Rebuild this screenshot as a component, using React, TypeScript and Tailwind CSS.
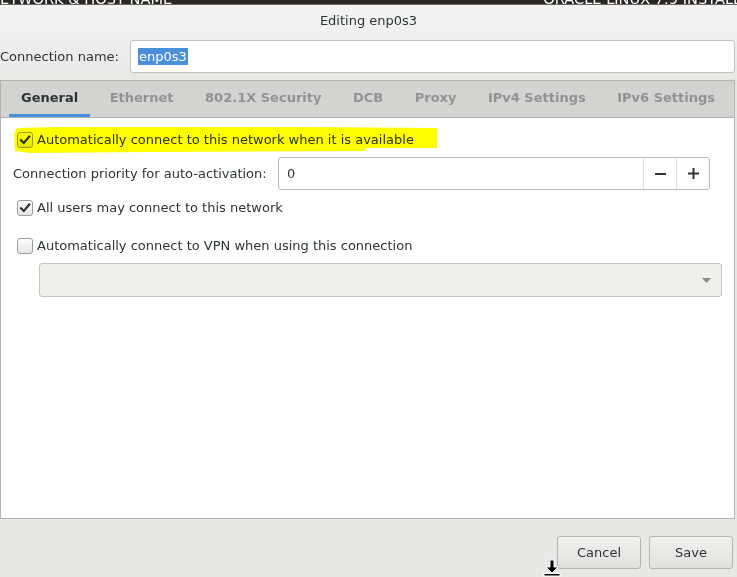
import React from "react";

const tabs = ["General", "Ethernet", "802.1X Security", "DCB", "Proxy", "IPv4 Settings", "IPv6 Settings"];

function CheckBox({ checked }: { checked: boolean }) {
  return (
    <span className="h-[16px] w-[16px] shrink-0 rounded-[3px] border border-[#9c9c9c] bg-linear-to-b from-white to-[#e4e4e2] flex items-center justify-center">
      {checked && (
        <svg width="12" height="12" viewBox="0 0 12 12">
          <path d="M2 6.2 L4.8 9 L10.2 2.6" fill="none" stroke="#2e3436" strokeWidth="2.2" strokeLinecap="square" />
        </svg>
      )}
    </span>
  );
}

export default function App() {
  return (
    <div className="relative w-[737px] h-[577px] overflow-hidden bg-[#e8e8e7] font-['DejaVu_Sans',sans-serif] text-[13px] text-[#2e3436]">
      {/* installer bar behind the dialog */}
      <div className="h-[5px] bg-[#2b2724] border-b border-[#6a6764] overflow-hidden flex justify-between">
        <span className="-mt-[8px] -ml-[11px] text-[14.6px] leading-none text-white whitespace-nowrap">NETWORK &amp; HOST NAME</span>
        <span className="-mt-[8px] -mr-[49px] text-[14.6px] leading-none text-white whitespace-nowrap">ORACLE LINUX 7.9 INSTALLATION</span>
      </div>

      <div className="bg-linear-to-b from-[#f4f4f4] to-[#e9e9e8]">
        <div className="pt-[8px] leading-[16px] text-center">Editing enp0s3</div>

        <div className="mt-[11px] flex items-center">
          <span className="w-[130px] leading-[16px]">Connection name:</span>
          <div className="h-[33px] w-[605px] rounded-[3px] border border-[#c0c0be] bg-white flex items-center pl-[7px]">
            <span className="bg-[#4a90d9] text-white leading-[17px] px-[1px]">enp0s3</span>
          </div>
        </div>
      </div>

      {/* notebook */}
      <div className="mt-[7px] w-[735px] h-[439px] border border-[#b3b3b1] bg-white flex flex-col">
        <div className="h-[37px] bg-[#d3d3d1] border-b border-[#b3b3b1] flex gap-[7.5px] pl-[8px]">
          {tabs.map((t, i) => (
            <div
              key={t}
              className={
                i === 0
                  ? "h-full px-[12px] pt-[9px] leading-[16px] font-bold text-[#2e3436] border-b-[3px] border-[#4a90d9]"
                  : "h-full px-[12px] pt-[9px] leading-[16px] font-bold text-[#929292] border-b-[3px] border-transparent"
              }
            >
              {t}
            </div>
          ))}
        </div>

        <div className="flex flex-col">
          <div className="mt-[14px] ml-[16px] h-[16px] flex items-center gap-[4px] leading-[16px]">
            <CheckBox checked />
            <span>Automatically connect to this network when it is available</span>
          </div>

          <div className="mt-[9px] h-[33px] flex items-center">
            <span className="ml-[12px] w-[265px] leading-[16px]">Connection priority for auto-activation:</span>
            <div className="h-[33px] w-[432px] rounded-[3px] border border-[#b9b9b7] bg-white flex">
              <div className="flex-1 flex items-center pl-[8px]">0</div>
              <div className="w-[33px] border-l border-[#e0e0de] flex items-center justify-center">
                <span className="h-[2px] w-[11px] bg-[#2e3436]" />
              </div>
              <div className="w-[33px] border-l border-[#e0e0de] flex items-center justify-center">
                <svg width="11" height="11" viewBox="0 0 11 11">
                  <path d="M0 5.5 H11 M5.5 0 V11" stroke="#2e3436" strokeWidth="2" />
                </svg>
              </div>
            </div>
          </div>

          <div className="mt-[10px] ml-[16px] h-[16px] flex items-center gap-[4px] leading-[16px]">
            <CheckBox checked />
            <span>All users may connect to this network</span>
          </div>

          <div className="mt-[22px] ml-[16px] h-[16px] flex items-center gap-[4px] leading-[16px]">
            <CheckBox checked={false} />
            <span>Automatically connect to VPN when using this connection</span>
          </div>

          <div className="mt-[9px] ml-[38px] h-[34px] w-[683px] rounded-[3px] border border-[#c4c4c2] bg-[#efefee] flex items-center justify-end pr-[10px]">
            <svg width="9" height="5" viewBox="0 0 9 5">
              <path d="M0 0 H9 L4.5 5 Z" fill="#8b8b8b" />
            </svg>
          </div>
        </div>
      </div>

      <div className="mt-[17px] flex justify-end gap-[8px] pr-[4px]">
        <button className="h-[33px] w-[84px] rounded-[3px] border border-[#b4b4b2] bg-linear-to-b from-[#f1f1f0] to-[#e0e0de] text-[13px] text-[#2e3436]">
          Cancel
        </button>
        <button className="h-[33px] w-[84px] rounded-[3px] border border-[#b4b4b2] bg-linear-to-b from-[#f1f1f0] to-[#e0e0de] text-[13px] text-[#2e3436]">
          Save
        </button>
      </div>

      {/* hand drawn highlight */}
      <svg className="absolute left-0 top-0 pointer-events-none mix-blend-multiply" width="737" height="577">
        <polygon
          points="14,134 17,128 60,127 300,127 437,128 437,148 366,148 365,151 150,152 30,153 15,151"
          fill="#ffff00"
        />
      </svg>

      {/* mouse cursor */}
      <svg className="absolute left-[542px] top-[559px] pointer-events-none" width="20" height="18" viewBox="0 0 20 18">
        <path d="M8 1 H12 V8 H16 L10 14 L4 8 H8 Z" fill="#000" stroke="#fff" strokeWidth="1" />
        <rect x="2" y="14.5" width="16" height="2.5" fill="#000" stroke="#fff" strokeWidth="1" />
      </svg>
    </div>
  );
}
